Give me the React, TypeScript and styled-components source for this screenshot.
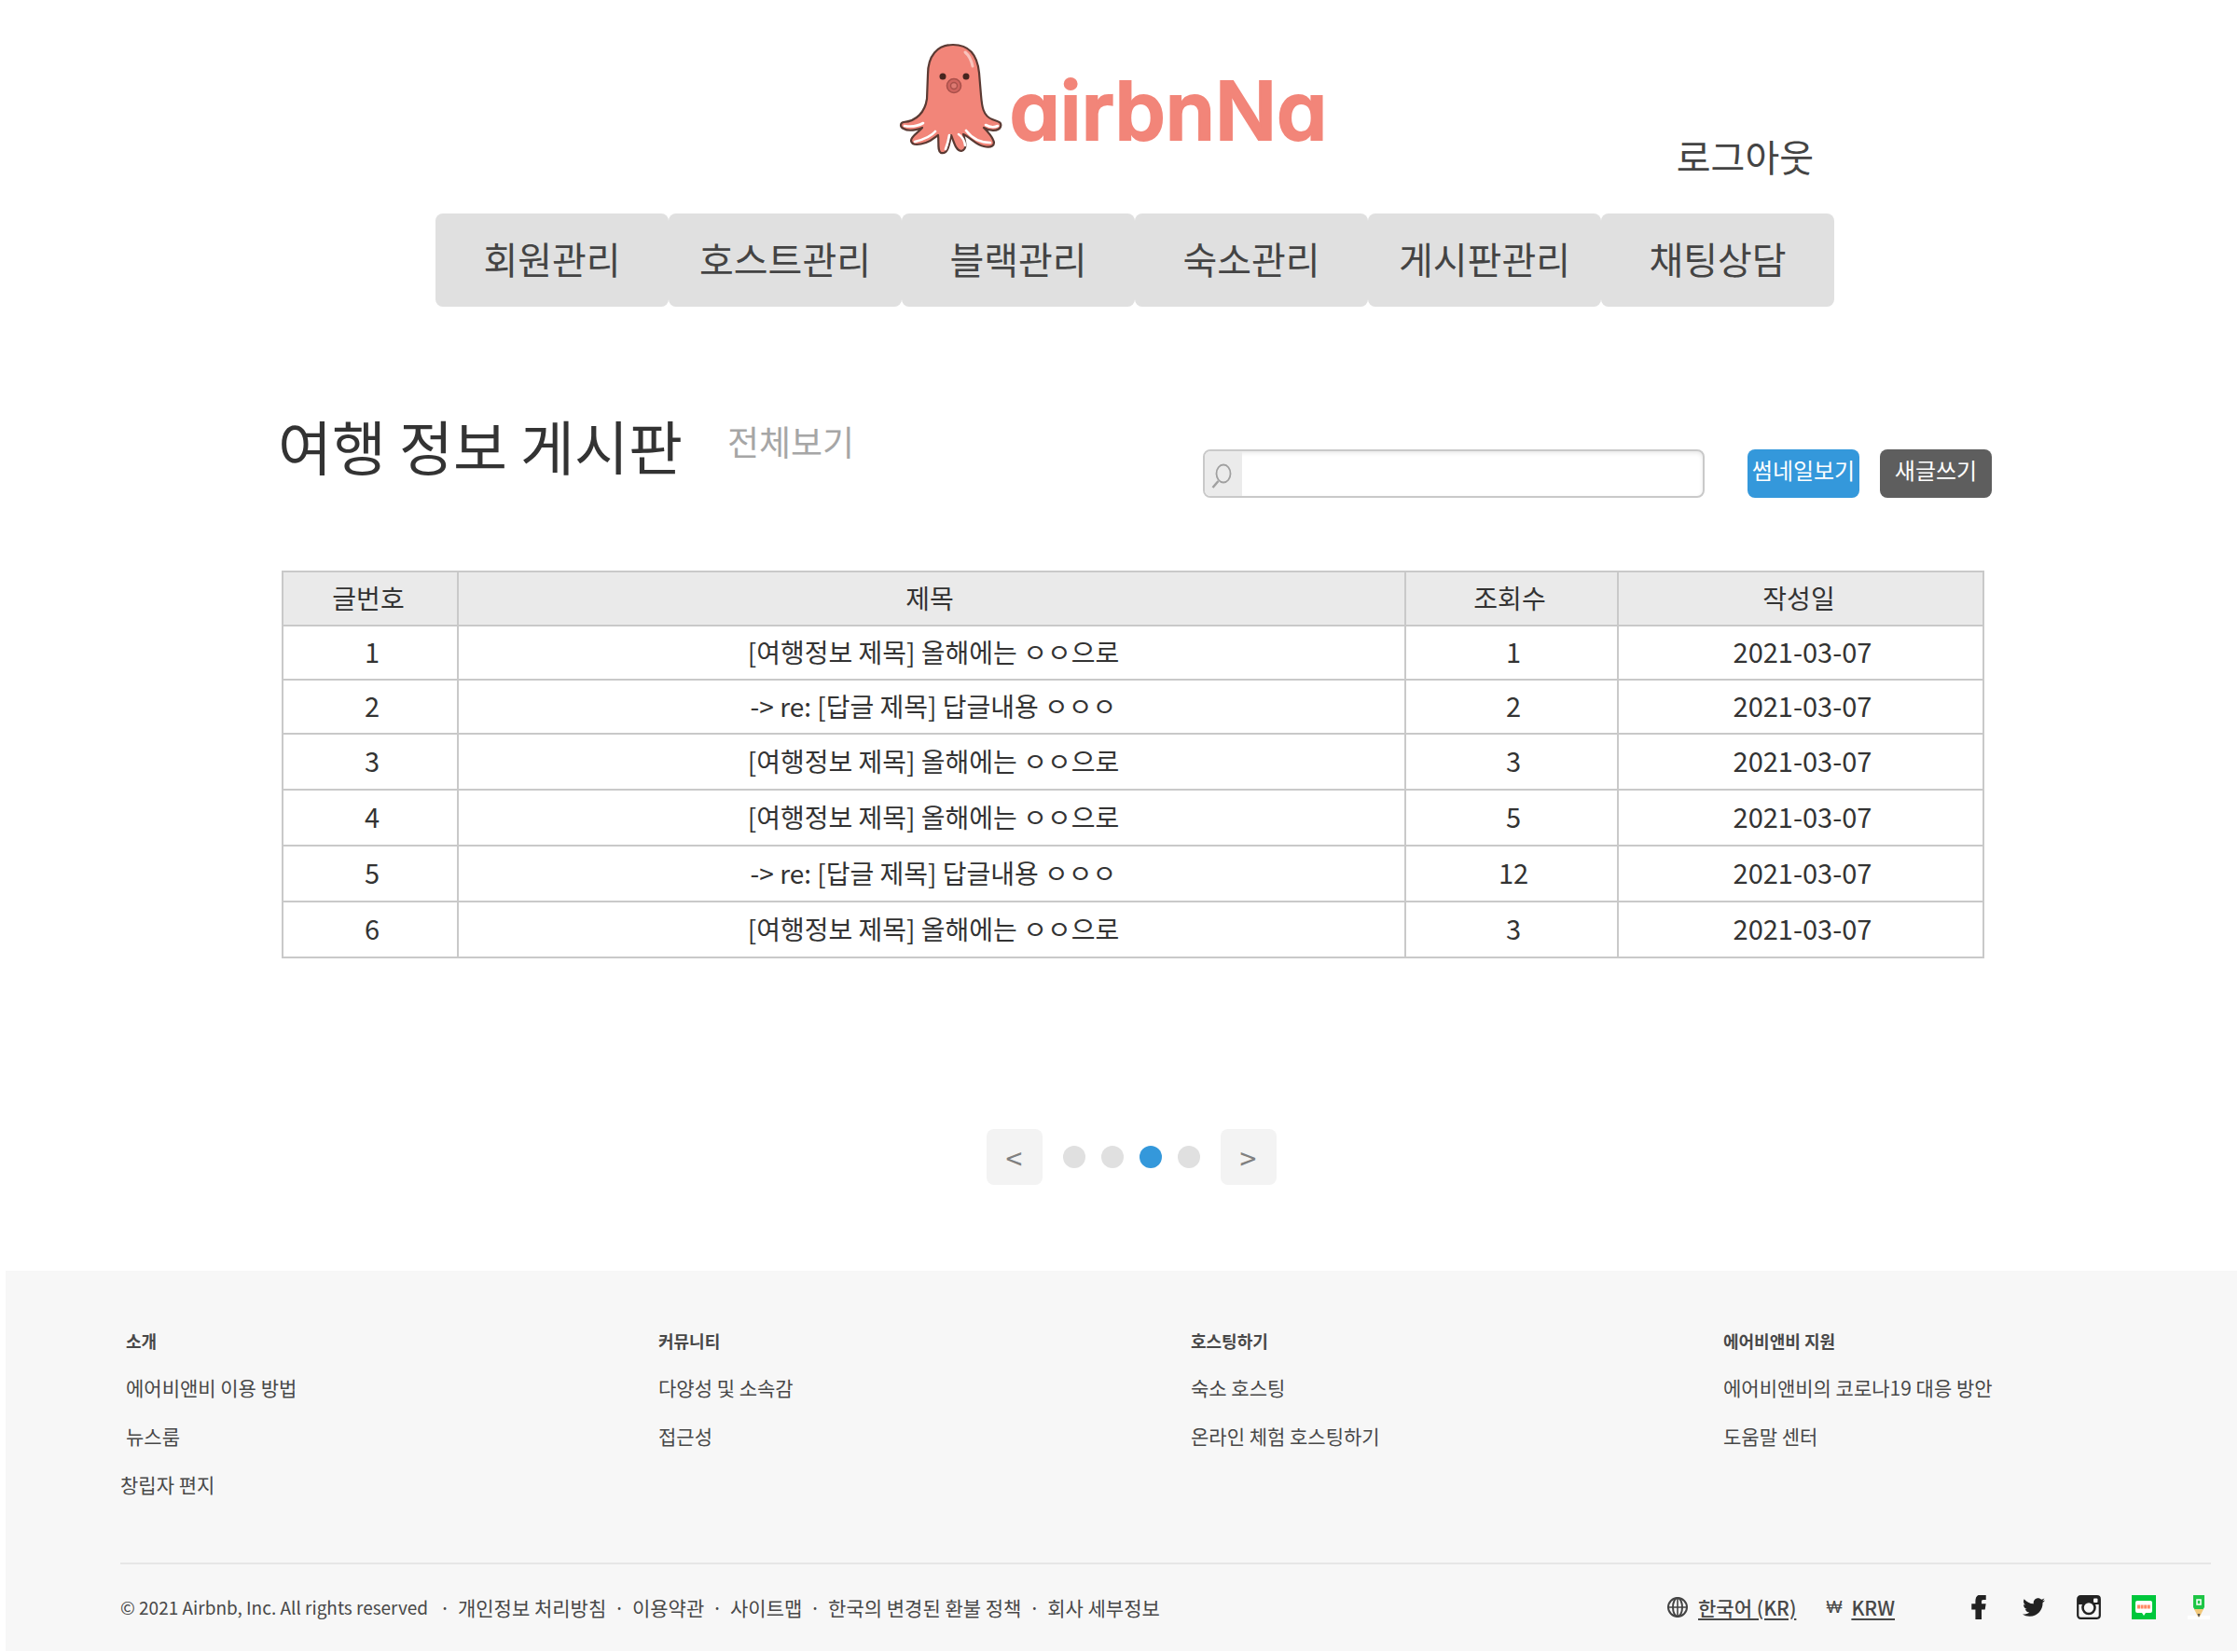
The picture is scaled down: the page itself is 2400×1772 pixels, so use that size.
import React from 'react';
import styled, { createGlobalStyle } from 'styled-components';
import { FaFacebookF, FaTwitter } from 'react-icons/fa';

const Global = createGlobalStyle`
  * { box-sizing: border-box; }
  body { margin: 0; background: #fff; color: #333; font-family: "Noto Sans CJK KR", sans-serif; }
  a { color: inherit; text-decoration: none; }
  h1, h2, ul, p { margin: 0; padding: 0; font-weight: 400; }
  ul { list-style: none; }
  button { border: 0; padding: 0; font: inherit; cursor: pointer; }
`;

const Header = styled.header`
  padding: 40px 433px 0 467px;
`;

const Masthead = styled.div`
  display: grid;
  grid-template-columns: 1fr auto 1fr;
  min-height: 189px;
  padding: 0 22px 32px 0;
`;

const Logo = styled.a`
  grid-column: 2;
  display: flex;
  align-self: start;
  height: 130px;
  gap: 8px;
  padding-right: 26px;
`;

const Wordmark = styled.span`
  font-family: Inter, sans-serif;
  font-feature-settings: "cv11";
  font-weight: 600;
  font-size: 87px;
  line-height: 158px;
  color: #f28579;
  -webkit-text-stroke: 2px #f28579;
`;

const Logout = styled.a`
  grid-column: 3;
  justify-self: end;
  align-self: end;
  font-size: 40px;
  line-height: 60px;
  color: #444;
`;

const Nav = styled.nav`
  display: flex;
`;

const NavItem = styled.a`
  flex: 1;
  padding-bottom: 4px;
  border-radius: 8px;
  background: #e0e0e0;
  color: #444;
  text-align: center;
  font-size: 40px;
  line-height: 96px;
`;

const Main = styled.main`
  padding: 108px 264px 92px 298px;
`;

const BoardHead = styled.div`
  display: flex;
  align-items: flex-start;
`;

const Title = styled.h1`
  font-size: 63px;
  line-height: 80px;
`;

const ViewAll = styled.a`
  margin-left: 48px;
  font-size: 37px;
  line-height: 72px;
  color: #a6a6a6;
`;

const Tools = styled.form`
  display: flex;
  margin: 45px 0 0 auto;
`;

const Search = styled.label`
  display: flex;
  width: 538px;
  height: 52px;
  margin-right: 46px;
  border: 2px solid #c9c9c9;
  border-radius: 8px;
  overflow: hidden;
  box-shadow: inset 0 2px 4px #e8e8e8;
`;

const SearchIcon = styled.span`
  display: flex;
  width: 40px;
  background: #ebebeb;
`;

const SearchInput = styled.input`
  flex: 1;
  min-width: 0;
  border: 0;
  outline: 0;
  padding: 0 12px;
  background: transparent;
  font: inherit;
  font-size: 24px;
`;

const Action = styled.button<{ $color: string }>`
  width: 120px;
  height: 52px;
  margin-right: 22px;
  padding-bottom: 8px;
  border-radius: 8px;
  background: ${(p) => p.$color};
  color: #fff;
  font-size: 24px;
  line-height: 36px;
  white-space: nowrap;
  &:last-child { margin-right: 0; }
`;

const Table = styled.table`
  width: calc(100% - 12px);
  margin: 78px 8px 0 4px;
  table-layout: fixed;
  border-collapse: collapse;
  font-size: 28px;
  line-height: 40px;
  text-align: center;
`;

const HeadCell = styled.th<{ $width?: number }>`
  width: ${(p) => (p.$width ? `${p.$width}px` : 'auto')};
  height: 58px;
  padding: 0 4px 2px 0;
  border: 2px solid #c9c9c9;
  background: #eaeaea;
  font-weight: 400;
`;

const Cell = styled.td<{ $height: number; $numeric?: boolean }>`
  height: ${(p) => p.$height}px;
  padding: 0 0 ${(p) => (p.$numeric ? 4 : 2)}px 4px;
  border: 2px solid #c9c9c9;
  font-size: ${(p) => (p.$numeric ? 29 : 28)}px;
`;

const Pager = styled.nav`
  display: flex;
  align-items: center;
  justify-content: center;
  gap: 22px;
  margin: 183px 8px 0 0;
`;

const Step = styled.button`
  width: 60px;
  height: 60px;
  border-radius: 8px;
  background: #f3f3f3;
  color: #808080;
  font-size: 32px;
  line-height: 60px;
`;

const Dots = styled.div`
  display: flex;
  gap: 17px;
`;

const Dot = styled.button<{ $active: boolean }>`
  width: 24px;
  height: 24px;
  border-radius: 50%;
  background: ${(p) => (p.$active ? '#3498db' : '#e0e0e0')};
`;

const Footer = styled.footer`
  margin: 0 1px 2px 6px;
  padding: 59px 28px 31px 123px;
  background: #f7f7f7;
  color: #484848;
  font-size: 21px;
`;

const Columns = styled.div`
  display: grid;
  grid-template-columns: repeat(4, 571px);
  padding: 0 0 58px 6px;
`;

const ColumnTitle = styled.h2`
  font-size: 18px;
  line-height: 32px;
  font-weight: 700;
  margin-bottom: 8px;
`;

const FootLink = styled.li<{ $outdent?: boolean }>`
  line-height: 52px;
  margin-left: ${(p) => (p.$outdent ? '-6px' : '0')};
`;

const Bottom = styled.div`
  display: flex;
  align-items: center;
  justify-content: space-between;
  border-top: 2px solid #e6e6e6;
  padding-top: 30px;
`;

const Legal = styled.ul`
  display: flex;
  line-height: 32px;
  li + li::before { content: "·"; margin: 0 8px; }
`;

const Copyright = styled.li`
  margin-right: 4px;
  font-size: 19px;
`;

const Right = styled.div`
  display: flex;
  align-items: center;
`;

const Locale = styled.a`
  display: flex;
  align-items: center;
  gap: 10px;
  margin-right: 32px;
  line-height: 32px;
  font-weight: 500;
  u { text-underline-offset: 3px; }
`;

const Won = styled.span`
  font-family: "Liberation Sans", sans-serif;
  font-size: 18px;
`;

const Socials = styled.div`
  display: flex;
  gap: 33px;
  margin-left: 45px;
  a { display: flex; align-items: center; justify-content: center; width: 26px; height: 26px; color: #222; }
`;

const Octopus = () => (
  <svg width="112" height="130" viewBox="0 0 112 130" aria-hidden="true">
    <path
      d="M59 8C42 8 32 20 32 40L31 66C29 80 20 90 6 91C2 92 2 96 6 98C11 101 18 100 26 97C22 102 14 106 14 111C15 117 24 115 30 113C36 111 39 108 43 105C44 112 42 122 46 124C54 126 55 114 57 105C60 112 62 122 68 122C75 120 72 111 70 104C77 107 84 116 92 117C100 119 105 116 102 110C100 105 96 101 92 97C98 101 108 101 110 96C112 90 105 90 101 88C91 84 90 74 89 62L87 38C85 18 76 8 59 8Z"
      fill="#f28579"
      stroke="#5a3a33"
      strokeWidth="2.2"
      strokeLinejoin="round"
    />
    <path
      d="M7 95Q18 97 27 92M18 112Q34 108 40 101M51 120Q54 112 55 105M72 116Q71 108 65 104M73 100Q83 113 99 113M94 94Q101 98 107 95"
      fill="none"
      stroke="#fff"
      strokeWidth="2.6"
      strokeLinecap="round"
    />
    <path d="M72 16Q78 21 80 31" fill="none" stroke="#f9c4bd" strokeWidth="3" strokeLinecap="round" />
    <circle cx="48" cy="42" r="3.5" fill="#46251f" />
    <circle cx="73" cy="42" r="3.5" fill="#46251f" />
    <circle cx="60" cy="52" r="7.5" fill="#d0655f" stroke="#a9504a" strokeWidth="1.6" />
    <circle cx="60" cy="52" r="3.5" fill="#de7b73" stroke="#a9504a" strokeWidth="1.4" />
  </svg>
);

const Magnifier = () => (
  <svg width="40" height="48" viewBox="0 0 40 48" fill="none" stroke="#a0a0a0" aria-hidden="true">
    <ellipse cx="20" cy="24" rx="7.5" ry="9.5" strokeWidth="1.8" />
    <path d="M14.5 32L8.5 39" strokeWidth="2.5" />
  </svg>
);

const Globe = () => (
  <svg width="24" height="24" viewBox="0 0 24 24" fill="none" stroke="#444" strokeWidth="2" aria-hidden="true">
    <circle cx="12" cy="12" r="10" />
    <ellipse cx="12" cy="12" rx="5" ry="10" />
    <path d="M2 12H22M12 2V22" strokeWidth="1.6" />
  </svg>
);

const Camera = () => (
  <svg width="26" height="26" viewBox="0 0 26 26" aria-hidden="true">
    <rect x="1.2" y="1.2" width="23.6" height="23.6" rx="3" fill="none" stroke="#222" strokeWidth="2.2" />
    <path d="M1 2H25V10H1Z" fill="#222" />
    <rect x="18" y="3.5" width="4.5" height="4.5" rx="1" fill="#f7f7f7" />
    <circle cx="13" cy="13.5" r="6.5" fill="#f7f7f7" stroke="#222" strokeWidth="2.6" />
  </svg>
);

const Blog = () => (
  <svg width="26" height="26" viewBox="0 0 26 26" aria-hidden="true">
    <rect width="26" height="26" fill="#00c73c" />
    <path d="M6 6H20Q22 6 22 8V17Q22 19 20 19H15L13 22L11 19H6Q4 19 4 17V8Q4 6 6 6Z" fill="#fff" />
    <path d="M6 12.5H20" stroke="#ff8a65" strokeWidth="4" strokeDasharray="3 .6" />
  </svg>
);

const Pen = () => (
  <svg width="26" height="26" viewBox="0 0 26 26" aria-hidden="true">
    <path d="M1 22H25V26H1Z" fill="#fff" />
    <path d="M7 0H19V13L17 16H9L7 13Z" fill="#1ec545" />
    <path d="M8 15H18L14 23H12Z" fill="#f2c879" />
    <path d="M11.5 20H14.5L13 24Z" fill="#555" />
    <rect x="11" y="5" width="4" height="5" fill="none" stroke="#fff" strokeWidth="1.5" />
  </svg>
);

const menu = ['회원관리', '호스트관리', '블랙관리', '숙소관리', '게시판관리', '채팅상담'];
const post = '[여행정보 제목] 올해에는 ㅇㅇ으로';
const reply = '-> re: [답글 제목] 답글내용 ㅇㅇㅇ';
const rows = [
  { id: 1, title: post, views: 1 },
  { id: 2, title: reply, views: 2 },
  { id: 3, title: post, views: 3 },
  { id: 4, title: post, views: 5 },
  { id: 5, title: reply, views: 12 },
  { id: 6, title: post, views: 3 },
];
const columns = [
  { title: '소개', links: ['에어비앤비 이용 방법', '뉴스룸', '창립자 편지'] },
  { title: '커뮤니티', links: ['다양성 및 소속감', '접근성'] },
  { title: '호스팅하기', links: ['숙소 호스팅', '온라인 체험 호스팅하기'] },
  { title: '에어비앤비 지원', links: ['에어비앤비의 코로나19 대응 방안', '도움말 센터'] },
];
const legal = ['개인정보 처리방침', '이용약관', '사이트맵', '한국의 변경된 환불 정책', '회사 세부정보'];

export default function App() {
  return (
    <>
      <Global />
      <Header>
        <Masthead>
          <Logo href="#">
            <Octopus />
            <Wordmark>airbnNa</Wordmark>
          </Logo>
          <Logout href="#">로그아웃</Logout>
        </Masthead>
        <Nav>
          {menu.map((m) => (
            <NavItem href="#" key={m}>{m}</NavItem>
          ))}
        </Nav>
      </Header>
      <Main>
        <BoardHead>
          <Title>여행 정보 게시판</Title>
          <ViewAll href="#">전체보기</ViewAll>
          <Tools onSubmit={(e) => e.preventDefault()}>
            <Search>
              <SearchIcon><Magnifier /></SearchIcon>
              <SearchInput type="text" aria-label="검색" />
            </Search>
            <Action type="button" $color="#3498db">썸네일보기</Action>
            <Action type="button" $color="#5e5e5e">새글쓰기</Action>
          </Tools>
        </BoardHead>
        <Table>
          <thead>
            <tr>
              <HeadCell $width={188}>글번호</HeadCell>
              <HeadCell>제목</HeadCell>
              <HeadCell $width={228}>조회수</HeadCell>
              <HeadCell $width={392}>작성일</HeadCell>
            </tr>
          </thead>
          <tbody>
            {rows.map((r) => {
              const height = r.id < 3 ? 58 : 60;
              return (
                <tr key={r.id}>
                  <Cell $height={height} $numeric>{r.id}</Cell>
                  <Cell $height={height}>{r.title}</Cell>
                  <Cell $height={height} $numeric>{r.views}</Cell>
                  <Cell $height={height} $numeric>2021-03-07</Cell>
                </tr>
              );
            })}
          </tbody>
        </Table>
        <Pager>
          <Step type="button">&lt;</Step>
          <Dots>
            {[1, 2, 3, 4].map((n) => (
              <Dot type="button" key={n} aria-label={`${n}`} $active={n === 3} />
            ))}
          </Dots>
          <Step type="button">&gt;</Step>
        </Pager>
      </Main>
      <Footer>
        <Columns>
          {columns.map((c) => (
            <div key={c.title}>
              <ColumnTitle>{c.title}</ColumnTitle>
              <ul>
                {c.links.map((l, i) => (
                  <FootLink key={l} $outdent={i === 2}><a href="#">{l}</a></FootLink>
                ))}
              </ul>
            </div>
          ))}
        </Columns>
        <Bottom>
          <Legal>
            <Copyright>© 2021 Airbnb, Inc. All rights reserved</Copyright>
            {legal.map((l) => (
              <li key={l}><a href="#">{l}</a></li>
            ))}
          </Legal>
          <Right>
            <Locale href="#"><Globe /><u>한국어 (KR)</u></Locale>
            <Locale href="#"><Won>₩</Won><u>KRW</u></Locale>
            <Socials>
              <a href="#" aria-label="Facebook"><FaFacebookF size={26} strokeWidth={30} /></a>
              <a href="#" aria-label="Twitter"><FaTwitter size={24} /></a>
              <a href="#" aria-label="Instagram"><Camera /></a>
              <a href="#" aria-label="Blog"><Blog /></a>
              <a href="#" aria-label="Post"><Pen /></a>
            </Socials>
          </Right>
        </Bottom>
      </Footer>
    </>
  );
}
